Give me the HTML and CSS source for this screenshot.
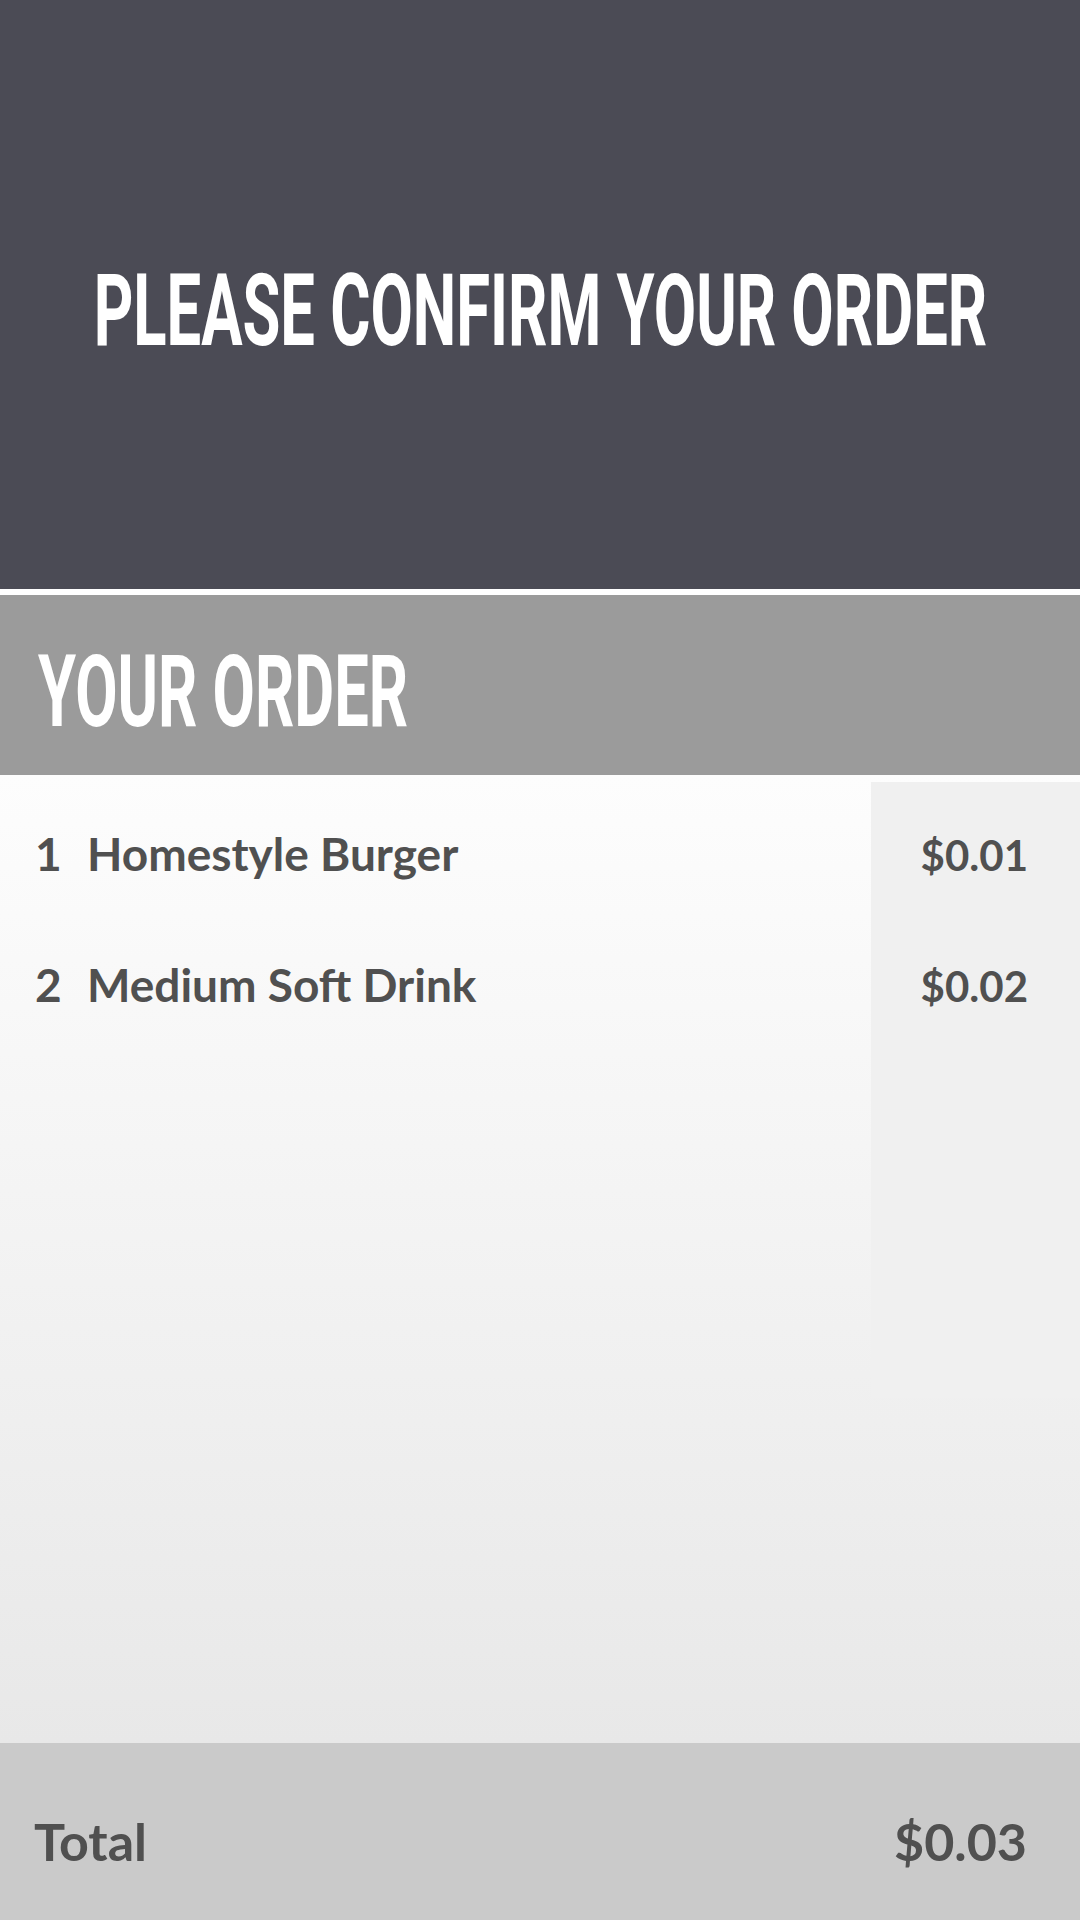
FILE: index.html
```html
<!DOCTYPE html>
<html lang="en">
<head>
<meta charset="utf-8">
<title>Confirm order</title>
<link rel="stylesheet" href="styles.css">
</head>
<body>
<div class="screen">
  <header class="hero">
    <h1 class="hero-title"><span class="condensed center">PLEASE CONFIRM YOUR ORDER</span></h1>
  </header>
  <section class="band">
    <h2 class="band-title"><span class="condensed left">YOUR ORDER</span></h2>
  </section>
  <section class="list">
    <div class="row">
      <div class="item"><span class="qty">1</span><span class="name">Homestyle Burger</span></div>
      <div class="price">$0.01</div>
    </div>
    <div class="row">
      <div class="item"><span class="qty">2</span><span class="name">Medium Soft Drink</span></div>
      <div class="price">$0.02</div>
    </div>
  </section>
  <footer class="total">
    <span class="total-label">Total</span>
    <span class="total-value">$0.03</span>
  </footer>
</div>
</body>
</html>
```
FILE: styles.css
```css
html, body {
  margin: 0;
  padding: 0;
  background: #ffffff;
}
.screen {
  width: 1080px;
  height: 1920px;
  display: flex;
  flex-direction: column;
  font-family: Lato, "Open Sans", "Liberation Sans", sans-serif;
  color: #505050;
  overflow: hidden;
}
.hero {
  height: 589px;
  box-sizing: border-box;
  padding-top: 32px;
  background: #4b4b55;
  display: flex;
  align-items: center;
  justify-content: center;
  flex: none;
}
.hero-title, .band-title {
  margin: 0;
  font-family: Roboto, "Liberation Sans", sans-serif;
  font-weight: 700;
  color: #ffffff;
  line-height: 1;
  white-space: nowrap;
}
.hero-title {
  font-size: 100px;
}
.condensed {
  display: inline-block;
}
.condensed.center {
  transform: scaleX(0.615);
  transform-origin: center;
}
.condensed.left {
  transform: scaleX(0.608);
  transform-origin: left center;
}
.band {
  margin-top: 6px;
  height: 180px;
  box-sizing: border-box;
  padding: 12px 0 0 38px;
  background: #9b9b9b;
  display: flex;
  align-items: center;
  flex: none;
}
.band-title {
  font-size: 101px;
}
.list {
  flex: 1;
  box-sizing: border-box;
  padding-top: 13px;
  background:
    linear-gradient(#f0f0f0, #f0f0f0) right 0 top 7px / 209px 616px no-repeat,
    linear-gradient(#fdfdfd, #e8e8e8);
}
.row {
  height: 131px;
  display: flex;
  align-items: baseline;
  line-height: 131px;
  font-weight: 700;
}
.item {
  flex: 1;
  padding-left: 35px;
  font-size: 46px;
  display: flex;
  align-items: baseline;
}
.qty {
  width: 52px;
}
.price {
  width: 209px;
  box-sizing: border-box;
  padding-right: 52px;
  text-align: right;
  font-size: 42px;
}
.total {
  height: 177px;
  box-sizing: border-box;
  padding: 19px 53px 0 34px;
  background: #cacaca;
  display: flex;
  align-items: center;
  justify-content: space-between;
  flex: none;
  font-size: 52px;
  font-weight: 700;
}
```
